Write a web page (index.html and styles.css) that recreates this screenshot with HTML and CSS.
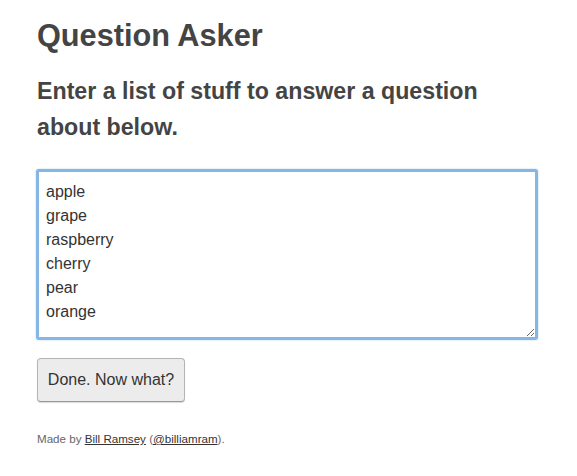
FILE: index.html
```html
<!DOCTYPE html>
<html>
<head>
<meta charset="utf-8">
<link rel="stylesheet" href="styles.css">
</head>
<body>
<div class="page">
  <h1 class="title">Question Asker</h1>
  <h2 class="subtitle">Enter a list of stuff to answer a question about below.</h2>
  <textarea class="list">apple
grape
raspberry
cherry
pear
orange</textarea>
  <button class="done">Done. Now what?</button>
  <p class="credit">Made by <a href="#">Bill Ramsey</a> (<a href="#">@billiamram</a>).</p>
</div>
</body>
</html>
```

FILE: styles.css
```css
html, body {
  margin: 0;
  padding: 0;
  background: #fff;
}
body {
  font-family: "Liberation Sans", Arial, sans-serif;
  color: #444;
}
.page {
  padding: 18px 37px 0 37px;
  display: flex;
  flex-direction: column;
  align-items: flex-start;
}
.title {
  margin: 0;
  font-size: 30.7px;
  line-height: 36px;
  font-weight: bold;
  color: #444;
}
.subtitle {
  margin: 19px 0 0 0;
  width: 470px;
  font-size: 23.2px;
  line-height: 36px;
  font-weight: bold;
  color: #444;
}
.list {
  margin: 24px 0 0 -1px;
  box-sizing: border-box;
  width: 502px;
  height: 171px;
  padding: 8px 7px;
  font-family: "Liberation Sans", Arial, sans-serif;
  font-size: 16px;
  line-height: 24px;
  color: #333;
  border: 3px solid #86b6e4;
  box-shadow: 0 0 2px #a9cdf0;
  border-radius: 3px;
  outline: none;
  resize: both;
}
.done {
  margin: 18px 0 0 0;
  box-sizing: border-box;
  width: 148px;
  height: 44px;
  padding: 0;
  font-family: "Liberation Sans", Arial, sans-serif;
  font-size: 16px;
  color: #333;
  background: #ececec;
  border: 1px solid #b4b4b4;
  border-bottom-color: #999;
  border-radius: 4px;
  box-shadow: 0 1px 1px rgba(0,0,0,0.15);
}
.credit {
  margin: 30px 0 0 0;
  font-size: 11.6px;
  line-height: 14px;
  color: #666;
}
.credit a {
  color: #333;
  text-decoration: underline;
}
```
